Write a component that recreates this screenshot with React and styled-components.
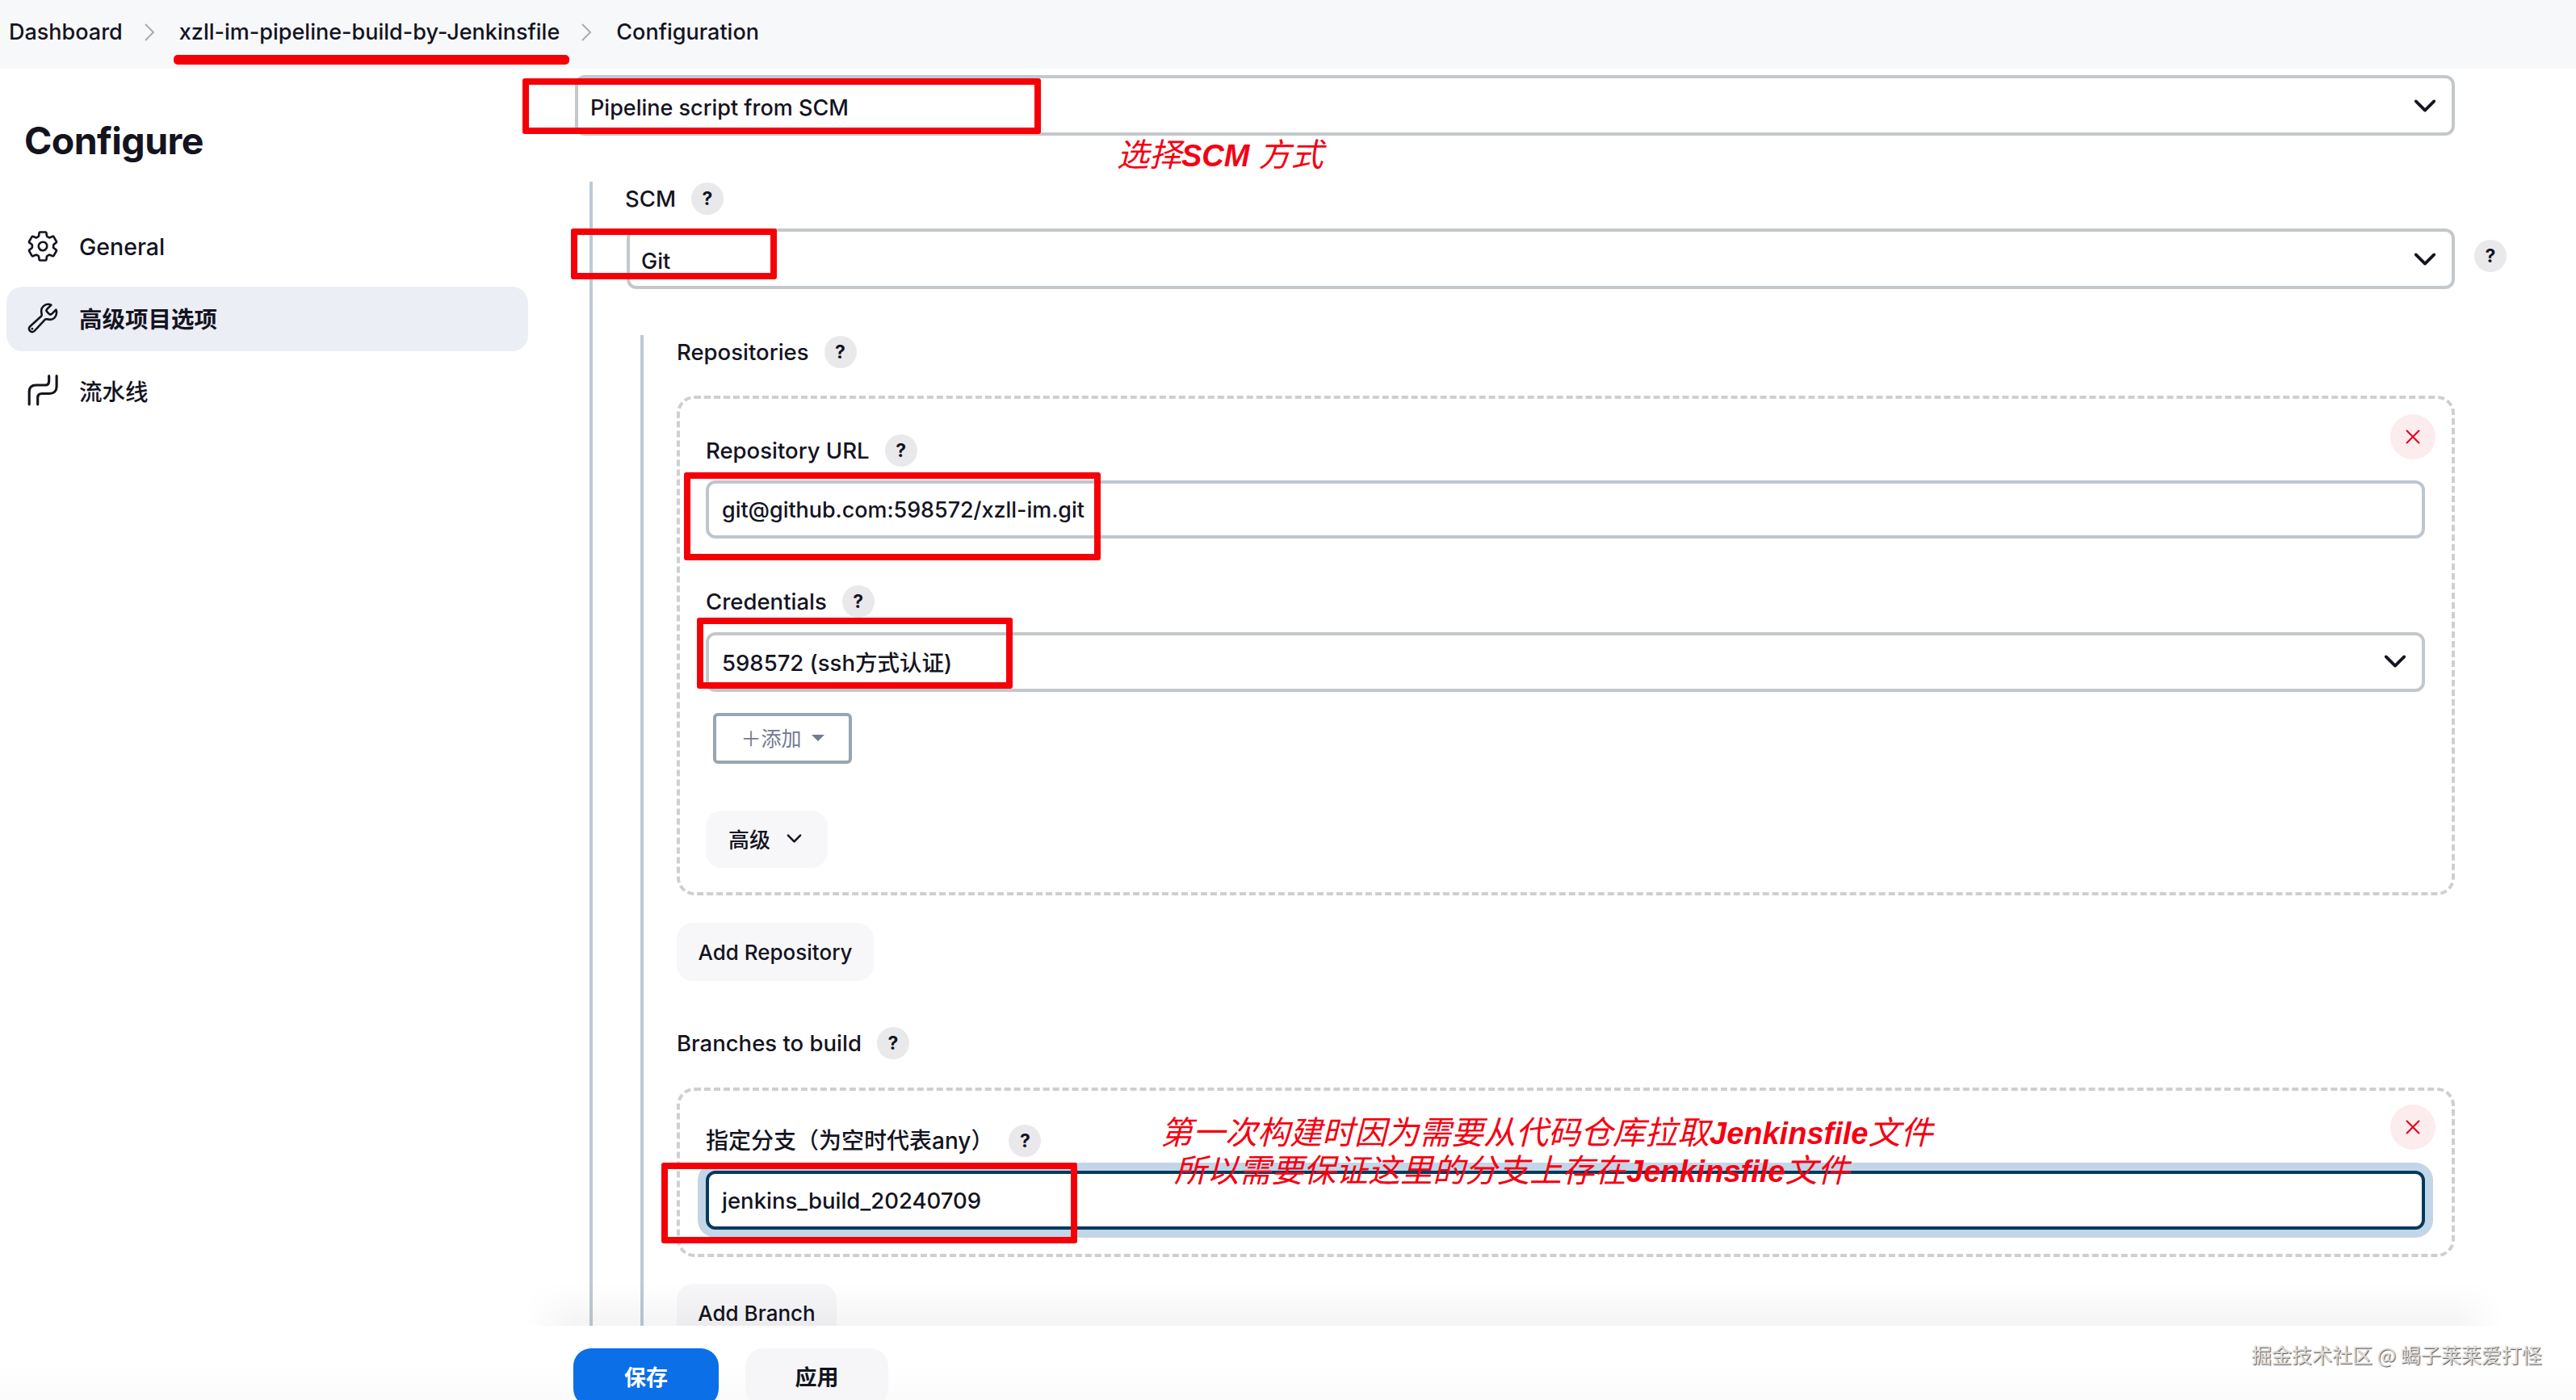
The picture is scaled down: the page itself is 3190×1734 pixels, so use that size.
import React from 'react';
import styled, { createGlobalStyle } from 'styled-components';
import { IoSettingsOutline, IoBuildOutline, IoChevronDown, IoCloseOutline } from 'react-icons/io5';

const GlobalStyle = createGlobalStyle`
  html, body {
    margin: 0;
    padding: 0;
    background: #fff;
  }
  * {
    box-sizing: border-box;
  }
`;

const Page = styled.div`
  position: relative;
  display: flex;
  flex-direction: column;
  width: 3190px;
  height: 1734px;
  overflow: hidden;
  background: #fff;
  color: #14141f;
  font-family: Inter, "Noto Sans CJK SC", sans-serif;
  font-size: 27px;
  font-weight: 500;
`;

const Breadcrumbs = styled.nav`
  display: flex;
  align-items: center;
  flex: none;
  height: 85px;
  padding: 0 0 6px 11px;
  background: #f7f8fa;
  font-size: 27px;
`;

const CrumbSep = styled.svg`
  width: 14px;
  height: 24px;
  margin: 0 30px 0 26px;
  fill: none;
  stroke: #a9acb2;
  stroke-width: 2;
`;

const Body = styled.div`
  display: flex;
  flex: 1;
  min-height: 0;
  overflow: hidden;
`;

const Sidebar = styled.aside`
  flex: none;
  width: 712px;
  padding: 60px 0 0 8px;
`;

const Title = styled.h1`
  margin: 0 0 62px 22px;
  font-size: 46.5px;
  line-height: 58px;
  font-weight: 700;
  letter-spacing: -0.6px;
`;

const NavList = styled.div`
  display: flex;
  flex-direction: column;
  gap: 10px;
  width: 646px;
`;

const NavItem = styled.div`
  display: flex;
  align-items: center;
  gap: 24px;
  height: 80px;
  padding: 0 0 ${props => (props.$cjk ? 3 : 0)}px 24px;
  border-radius: 20px;
  background: ${props => (props.$active ? '#eceef6' : 'transparent')};
  font-size: 28.5px;
  font-weight: ${props => (props.$active ? 600 : 500)};
  svg {
    flex: none;
    width: 42px;
    height: 42px;
  }
`;

const PipelineIcon = styled.svg`
  fill: none;
  stroke: #14141f;
  stroke-width: 3;
  stroke-linecap: round;
`;

const Content = styled.main`
  flex: 1;
  min-width: 0;
  padding: 8px 150px 0 0;
`;

const Select = styled.div`
  display: flex;
  align-items: center;
  justify-content: space-between;
  flex: 1;
  min-width: 0;
  height: ${props => props.$height || 75}px;
  padding: ${props => (props.$cjk ? '0 13px 2px' : '5px 13px 0')} ${props => props.$pad || 15}px;
  padding-right: 13px;
  border: 4px solid #c3c8cc;
  border-radius: 12px;
  background: #fff;
  color: #14141f;
  font-size: ${props => (props.$cjk ? 27.5 : 27)}px;
  svg {
    flex: none;
    width: 40px;
    height: 40px;
    margin-top: ${props => (props.$cjk ? 0 : -5)}px;
  }
`;

const Nested = styled.div`
  margin: 57px 0 0 18px;
  padding: 0 0 80px 40px;
  border-left: 4px solid #bccad6;
`;

const LabelRow = styled.div`
  display: flex;
  align-items: center;
  gap: 19px;
  height: 42px;
  font-size: ${props => props.$size || 27.5}px;
  line-height: 42px;
`;

const Help = styled.span`
  display: inline-flex;
  align-items: center;
  justify-content: center;
  flex: none;
  width: 40px;
  height: 40px;
  border-radius: 50%;
  background: #e9e9eb;
  font-family: Inter, sans-serif;
  font-size: 23px;
  font-weight: 700;
  color: #14141f;
`;

const SelectRow = styled.div`
  display: flex;
  align-items: center;
  gap: 24px;
  margin: 16px -64px 0 2px;
  ${Help} {
    margin-top: -7px;
  }
`;

const Inner = styled.div`
  margin: 57px 0 0 19px;
  padding: 0 0 60px 41px;
  border-left: 4px solid #bccad6;
`;

const RepeatBox = styled.div`
  position: relative;
  margin-top: ${props => props.$top}px;
  padding: ${props => props.$padTop}px 33px ${props => props.$padBottom}px 32px;
  border: 4px dashed #cdd0d3;
  border-radius: 22px;
`;

const CloseButton = styled.span`
  position: absolute;
  top: ${props => props.$top}px;
  right: 20px;
  display: flex;
  align-items: center;
  justify-content: center;
  width: 56px;
  height: 56px;
  border-radius: 50%;
  background: #fdeced;
  color: #e6001f;
  svg {
    width: 34px;
    height: 34px;
  }
`;

const TextField = styled.div`
  display: flex;
  align-items: center;
  height: ${props => props.$height}px;
  margin-top: 16px;
  padding-left: 16px;
  border: 4px solid ${props => (props.$focus ? '#003b5c' : '#bdc6cf')};
  border-radius: 12px;
  background: #fff;
  font-size: ${props => props.$size}px;
  box-shadow: ${props => (props.$focus ? '0 0 0 10px #c3d6e8' : 'none')};
`;

const FieldGroup = styled.div`
  margin-top: ${props => props.$top}px;
`;

const CredRow = styled.div`
  margin-top: 17px;
  height: 74px;
  display: flex;
`;

const AddButton = styled.div`
  display: flex;
  align-items: center;
  justify-content: center;
  gap: 8px;
  width: 172px;
  height: 63px;
  margin: 26px 0 0 9px;
  padding-bottom: 3px;
  border: 4px solid #9aa5b1;
  border-radius: 6px;
  color: #737a92;
  font-size: 25px;
  font-weight: 400;
`;

const Caret = styled.span`
  width: 0;
  height: 0;
  margin: 2px 0 0 4px;
  border-left: 8px solid transparent;
  border-right: 8px solid transparent;
  border-top: 8px solid #737a92;
`;

const SoftButton = styled.div`
  display: flex;
  align-items: center;
  justify-content: center;
  gap: ${props => props.$gap || 0}px;
  width: ${props => props.$width}px;
  height: ${props => props.$height || 72}px;
  margin-top: ${props => props.$top}px;
  padding-bottom: ${props => (props.$gap ? 3 : 0)}px;
  border-radius: 20px;
  background: #f7f7f9;
  font-size: 26px;
  font-weight: 500;
  svg {
    width: 27px;
    height: 27px;
  }
`;

const BranchRow = styled(LabelRow)`
  margin-top: 56px;
`;

const Footer = styled.footer`
  position: relative;
  display: flex;
  align-items: flex-start;
  gap: 33px;
  flex: none;
  height: 92px;
  padding: 28px 0 0 710px;
  background: linear-gradient(to bottom, #fff 55%, #fbfbfb 100%);
  &::before {
    content: '';
    position: absolute;
    top: -52px;
    left: 650px;
    right: 90px;
    height: 52px;
    background: linear-gradient(to top, rgba(0, 0, 0, 0.045), rgba(0, 0, 0, 0));
    -webkit-mask-image: linear-gradient(to right, transparent, #000 60px, #000 calc(100% - 60px), transparent);
    mask-image: linear-gradient(to right, transparent, #000 60px, #000 calc(100% - 60px), transparent);
  }
`;

const SaveButton = styled.div`
  display: flex;
  align-items: center;
  justify-content: center;
  width: 180px;
  height: 72px;
  padding-bottom: 4px;
  border-radius: 22px;
  background: #0b6fe8;
  color: #fff;
  font-size: 27px;
  font-weight: 700;
`;

const ApplyButton = styled(SaveButton)`
  width: 177px;
  background: #f6f6f8;
  color: #14141f;
  font-weight: 600;
`;

// overlays painted on the screenshot afterwards
const RedBox = styled.div`
  position: absolute;
  left: ${props => props.$x}px;
  top: ${props => props.$y}px;
  width: ${props => props.$w}px;
  height: ${props => props.$h}px;
  border: 8px solid #f50008;
  border-radius: 3px;
`;

const RedLine = styled.div`
  position: absolute;
  left: 215px;
  top: 68px;
  width: 490px;
  height: 12px;
  border-radius: 5px;
  background: #f50008;
`;

const Note = styled.div`
  position: absolute;
  left: ${props => props.$x}px;
  top: ${props => props.$y}px;
  color: #f50012;
  font-family: "Liberation Sans", "Noto Sans CJK SC", sans-serif;
  font-size: 40px;
  line-height: 48px;
  font-style: italic;
  font-weight: 400;
  white-space: nowrap;
  b {
    font-size: 38px;
    font-weight: 700;
  }
`;

const Watermark = styled.div`
  position: absolute;
  left: 2788px;
  top: 1659px;
  color: #dcdcdc;
  font-family: "Noto Sans CJK SC", sans-serif;
  font-size: 25px;
  line-height: 36px;
  font-weight: 400;
  text-shadow: 1px 1px 1px #555;
  white-space: nowrap;
`;

const App = () => {
  return (
    <Page>
      <GlobalStyle />
      <Breadcrumbs>
        <span>Dashboard</span>
        <CrumbSep viewBox="0 0 14 24"><path d="M2 2l10 10L2 22" /></CrumbSep>
        <span>xzll-im-pipeline-build-by-Jenkinsfile</span>
        <CrumbSep viewBox="0 0 14 24"><path d="M2 2l10 10L2 22" /></CrumbSep>
        <span>Configuration</span>
      </Breadcrumbs>

      <Body>
        <Sidebar>
          <Title>Configure</Title>
          <NavList>
            <NavItem><IoSettingsOutline />General</NavItem>
            <NavItem $active $cjk><IoBuildOutline />高级项目选项</NavItem>
            <NavItem $cjk>
              <PipelineIcon viewBox="0 0 40 40">
                <path d="M4 36V21C4 16 7 13.3 12 13.3H23C26 13.3 27.3 11 27.3 8V2.5" />
                <path d="M14 36V28C14 25 16 23.3 19 23.3H28C33 23.3 36.3 20 36.3 15V2.5" />
              </PipelineIcon>
              流水线
            </NavItem>
          </NavList>
        </Sidebar>

        <Content>
          <Select>Pipeline script from SCM<IoChevronDown /></Select>

          <Nested>
            <LabelRow>SCM<Help>?</Help></LabelRow>
            <SelectRow>
              <Select $pad={14}>Git<IoChevronDown /></Select>
              <Help>?</Help>
            </SelectRow>

            <Inner>
              <LabelRow>Repositories<Help>?</Help></LabelRow>

              <RepeatBox $top={33} $padTop={43} $padBottom={30}>
                <CloseButton $top={19}><IoCloseOutline /></CloseButton>
                <LabelRow>Repository URL<Help>?</Help></LabelRow>
                <TextField $height={72} $size={26.9}>git@github.com:598572/xzll-im.git</TextField>
                <FieldGroup $top={57}>
                  <LabelRow>Credentials<Help>?</Help></LabelRow>
                </FieldGroup>
                <CredRow>
                  <Select $height={74} $pad={16} $cjk>598572 (ssh方式认证)<IoChevronDown /></Select>
                </CredRow>
                <AddButton>＋添加<Caret /></AddButton>
                <SoftButton $width={151} $height={71} $top={58} $gap={16}>高级<IoChevronDown /></SoftButton>
              </RepeatBox>

              <SoftButton $width={244} $top={34}>Add Repository</SoftButton>

              <BranchRow>Branches to build<Help>?</Help></BranchRow>

              <RepeatBox $top={34} $padTop={41} $padBottom={30}>
                <CloseButton $top={17}><IoCloseOutline /></CloseButton>
                <LabelRow $size={28}>指定分支（为空时代表any）<Help>?</Help></LabelRow>
                <TextField $height={73} $size={27.5} $focus>jenkins_build_20240709</TextField>
              </RepeatBox>

              <SoftButton $width={198} $top={33}>Add Branch</SoftButton>
            </Inner>
          </Nested>
        </Content>
      </Body>

      <Footer>
        <SaveButton>保存</SaveButton>
        <ApplyButton>应用</ApplyButton>
      </Footer>

      <RedLine />
      <RedBox $x={647} $y={97} $w={642} $h={69} />
      <RedBox $x={707} $y={283} $w={255} $h={63} />
      <RedBox $x={847} $y={585} $w={516} $h={109} />
      <RedBox $x={863} $y={765} $w={391} $h={88} />
      <RedBox $x={819} $y={1440} $w={515} $h={100} />

      <Note $x={1383} $y={168}>选择<b>SCM</b> 方式</Note>
      <Note $x={1437} $y={1379}>第一次构建时因为需要从代码仓库拉取<b>Jenkinsfile</b>文件</Note>
      <Note $x={1454} $y={1426}>所以需要保证这里的分支上存在<b>Jenkinsfile</b>文件</Note>

      <Watermark>掘金技术社区 @ 蝎子莱莱爱打怪</Watermark>
    </Page>
  );
};

export default App;
